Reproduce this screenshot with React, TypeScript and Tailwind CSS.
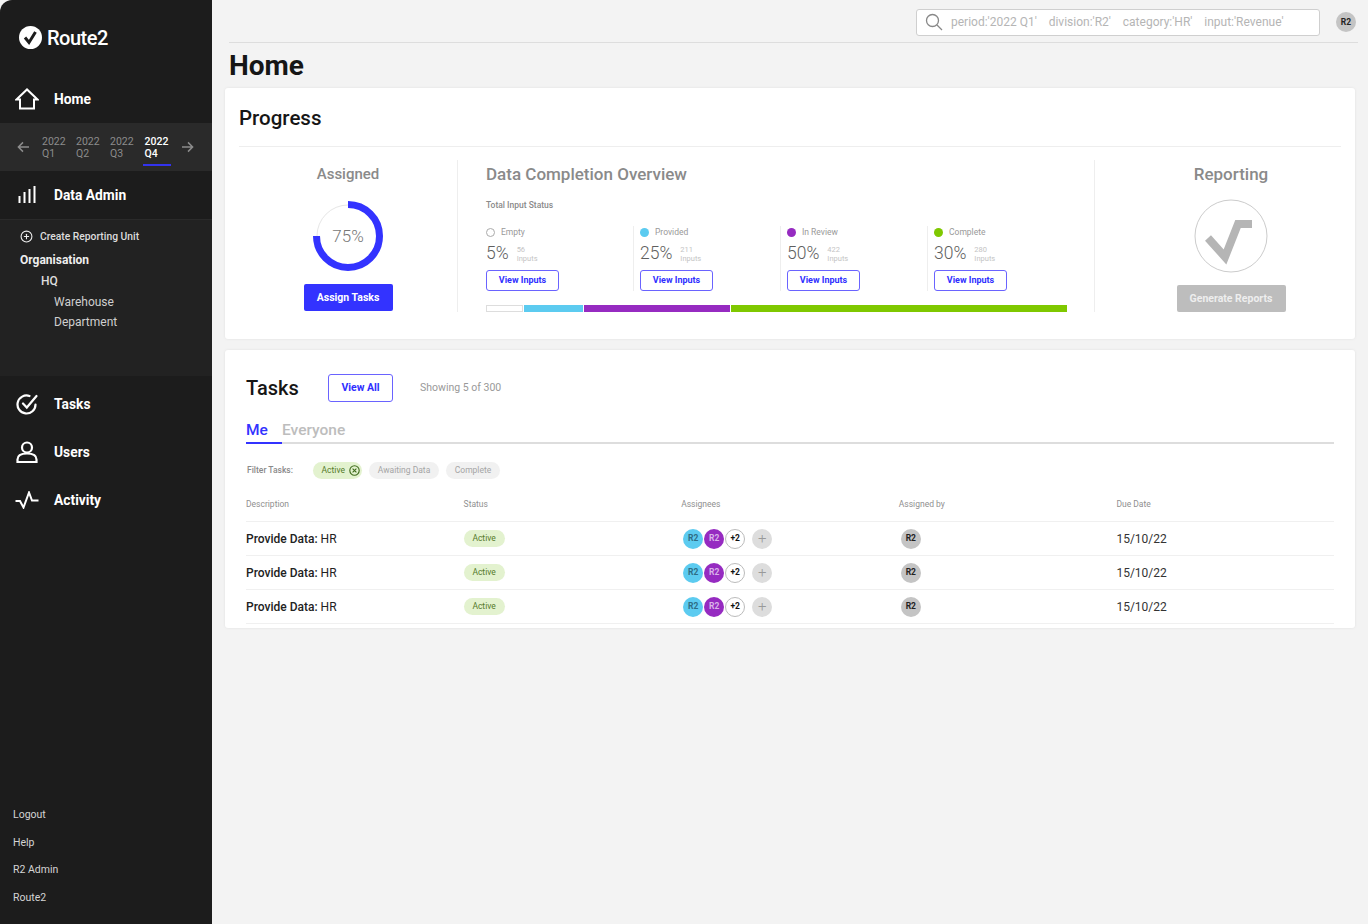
import { CirclePlus } from "lucide-react";

const font = { fontFamily: "Roboto, 'Liberation Sans', sans-serif" };

function HomeIcon() {
  return (
    <svg width="24" height="22" viewBox="0 0 24 22" fill="none" stroke="white" strokeWidth="2" strokeLinejoin="miter">
      <path d="M1.5 11.5 12 1.5l10.5 10H19V20.5H5V11.5Z" />
    </svg>
  );
}

function BarsIcon() {
  return (
    <svg width="18" height="18" viewBox="0 0 18 18" fill="none" stroke="white" strokeWidth="2">
      <path d="M1.5 10v7M6.5 6v11M11.5 3v14M16.5 0v17" />
    </svg>
  );
}

function TasksIcon() {
  return (
    <svg width="22" height="22" viewBox="0 0 22 22" fill="none" stroke="white" strokeWidth="2.2" strokeLinecap="round">
      <path d="M19.5 11.5A9 9 0 1 1 13.5 3" />
      <path d="M7 10.5l3.8 4L20.5 3" />
    </svg>
  );
}

function UserIcon() {
  return (
    <svg width="22" height="22" viewBox="0 0 22 22" fill="none" stroke="white" strokeWidth="2.2">
      <circle cx="11" cy="6.5" r="5" />
      <path d="M1.5 21v-2.5c0-4 4-6 9.5-6s9.5 2 9.5 6V21Z" />
    </svg>
  );
}

function ActivityIcon() {
  return (
    <svg width="24" height="18" viewBox="0 0 24 18" fill="none" stroke="white" strokeWidth="2">
      <path d="M0.5 10H5l3.5 6.5L14 1.5l3 8h6.5" />
    </svg>
  );
}

function ArrowIcon({ flip }: { flip?: boolean }) {
  return (
    <svg width="12" height="12" viewBox="0 0 13 12" fill="none" stroke="#8c8c8c" strokeWidth="1.6" className={flip ? "rotate-180" : ""}>
      <path d="M6.5 1 1.5 6l5 5M1.5 6H13" />
    </svg>
  );
}

function NavRow({ icon, label }: { icon: React.ReactNode; label: string }) {
  return (
    <div className="flex h-12 items-center">
      <div className="flex w-[54px] justify-center">{icon}</div>
      <span className="text-[13.8px] font-bold text-white">{label}</span>
    </div>
  );
}

function Stat({ color, label, pct, count, line }: { color: string; label: string; pct: string; count: string; line?: boolean }) {
  return (
    <div className={line ? "w-[147px] border-l border-[#eeeeee] pl-[6px]" : "w-[147px]"}>
      <div className="flex h-3 items-center gap-[6px]">
        {color === "empty" ? (
          <span className="h-[9px] w-[9px] rounded-full border border-[#aaaaaa] bg-white" />
        ) : (
          <span className="h-[9px] w-[9px] rounded-full" style={{ backgroundColor: color }} />
        )}
        <span className="text-[8.5px] text-[#999999]">{label}</span>
      </div>
      <div className="mt-[2px] flex h-[26px] items-center gap-2 pt-[2px]">
        <span className="text-[17.5px] font-light leading-none text-[#5f5f5f]">{pct}</span>
        <span className="text-[7.5px] leading-[9px] text-[#c4c4c4]">
          {count}
          <br />
          Inputs
        </span>
      </div>
      <button className="h-[21px] w-[73px] rounded-[3px] border-[1.5px] border-[#6a63ff] bg-white text-[9px] font-bold text-[#2f2fff]">
        View Inputs
      </button>
    </div>
  );
}

function Avatar({ bg, text, children }: { bg: string; text: string; children: string }) {
  return (
    <span className={`flex h-5 w-5 items-center justify-center rounded-full text-[8.5px] font-bold ${bg} ${text}`}>{children}</span>
  );
}

function TaskRow() {
  return (
    <div className="grid h-[34px] grid-cols-5 items-center border-t border-[#f0f0f0]">
      <div className="text-[12px] font-medium text-[#222222]">
        Provide Data: <span className="font-normal">HR</span>
      </div>
      <div className="flex">
        <span className="flex h-[17px] w-[41px] items-center justify-center rounded-full bg-[#e3f2cf] text-[8.5px] text-[#557a2a]">Active</span>
      </div>
      <div className="flex items-center pl-[2px]">
        <Avatar bg="bg-[#5ccbf0]" text="text-[#2f6d85]">R2</Avatar>
        <span className="ml-px"><Avatar bg="bg-[#962bc1]" text="text-[#d9b3e8]">R2</Avatar></span>
        <span className="ml-px flex h-5 w-5 items-center justify-center rounded-full border border-[#bbbbbb] bg-white text-[8.5px] font-bold text-[#111111]">+2</span>
        <span className="ml-[7px] flex h-5 w-5 items-center justify-center rounded-full bg-[#dddddd] text-[15px] font-light leading-none text-[#999999]">+</span>
      </div>
      <div className="pl-[2px]">
        <Avatar bg="bg-[#c4c4c4]" text="text-[#222222]">R2</Avatar>
      </div>
      <div className="text-[12px] text-[#333333]">15/10/22</div>
    </div>
  );
}

export default function App() {
  return (
    <div className="flex h-[924px] w-[1368px] overflow-hidden bg-[#f3f3f3]" style={font}>
      <aside className="flex w-[212px] shrink-0 flex-col rounded-tl-[12px] bg-[#1c1c1c]">
        <div className="flex h-[75px] items-center gap-[5px] pl-[19px]">
          <svg width="23" height="23" viewBox="0 0 23 23">
            <circle cx="11.5" cy="11.5" r="11.5" fill="white" />
            <path d="M6 11.5l4 5 6.5-10.5" fill="none" stroke="#1c1c1c" strokeWidth="3" />
          </svg>
          <span className="text-[20px] font-medium tracking-[-0.5px] text-white">Route2</span>
        </div>
        <NavRow icon={<HomeIcon />} label="Home" />
        <div className="flex h-12 items-center bg-[#2a2a2a] pl-[17px] pt-[2px] text-[10.5px] leading-[12px] text-[#8c8c8c]">
          <span className="-mt-[3px] w-[25px]"><ArrowIcon /></span>
          <div className="w-[34px]">2022<br />Q1</div>
          <div className="w-[34px]">2022<br />Q2</div>
          <div className="w-[34.5px]">2022<br />Q3</div>
          <div className="relative w-[37px] font-medium text-white">
            2022<br />Q4
            <span className="absolute -bottom-[6px] -left-[2px] h-[2px] w-[28px] bg-[#3333ee]" />
          </div>
          <span className="-mt-[3px]"><ArrowIcon flip /></span>
        </div>
        <NavRow icon={<BarsIcon />} label="Data Admin" />
        <div className="h-[157px] border-t border-[#2a2a2a] bg-[#222222] pl-5 pt-[9px]">
          <div className="flex h-[15px] items-center gap-[7px]">
            <CirclePlus size={13} color="#eeeeee" />
            <span className="text-[10.3px] font-medium text-[#dddddd]">Create Reporting Unit</span>
          </div>
          <div className="mt-[8px] text-[12px] font-bold leading-[17px] text-[#eeeeee]">Organisation</div>
          <div className="mt-[4px] pl-[21px] text-[12px] font-medium leading-[17px] text-[#dddddd]">HQ</div>
          <div className="mt-[3.5px] pl-[34px] text-[12px] leading-[17px] text-[#cfcfcf]">Warehouse</div>
          <div className="mt-[3.5px] pl-[34px] text-[12px] leading-[17px] text-[#cfcfcf]">Department</div>
        </div>
        <div className="h-[4px]" />
        <NavRow icon={<TasksIcon />} label="Tasks" />
        <NavRow icon={<UserIcon />} label="Users" />
        <NavRow icon={<ActivityIcon />} label="Activity" />
        <div className="mt-auto flex flex-col gap-[13px] pb-[19px] pl-[13px] text-[10.5px] leading-[14.5px] text-[#d4d4d4]">
          <span>Logout</span>
          <span>Help</span>
          <span>R2 Admin</span>
          <span>Route2</span>
        </div>
      </aside>

      <main className="flex-1 pl-[13px] pr-[13px]">
        <div className="-mr-[3px] ml-1 flex h-[43px] items-center justify-end gap-[16px] border-b border-[#dddddd] pt-[2px]">
          <div className="flex h-[27px] w-[404px] items-center rounded-[3px] border border-[#cfcfcf] bg-white pl-[8px] text-[12px] text-[#b5b5b5]">
            <svg width="18" height="18" viewBox="0 0 18 18" fill="none" stroke="#888888" strokeWidth="1.3">
              <circle cx="7.5" cy="7.5" r="6" />
              <path d="M12 12l5 5" />
            </svg>
            <span className="ml-[8px] whitespace-pre">period:'2022 Q1'    division:'R2'    category:'HR'    input:'Revenue'</span>
          </div>
          <span className="mr-[2px] flex h-5 w-5 items-center justify-center rounded-full bg-[#c4c4c4] text-[8.5px] font-bold text-[#222222]">R2</span>
        </div>
        <h1 className="ml-1 flex h-[45px] items-center text-[28px] font-bold text-[#161616]">Home</h1>

        <section className="h-[251px] rounded-[3px] bg-white px-[14px] shadow-[0_0_3px_rgba(0,0,0,0.08)]">
          <div className="flex h-[59px] items-center border-b border-[#eeeeee] pt-[2px] text-[20.5px] font-medium text-[#161616]">Progress</div>
          <div className="mt-[13px] flex h-[152px]">
            <div className="flex w-[219px] shrink-0 flex-col items-center border-r border-[#eeeeee]">
              <div className="text-[15px] font-medium leading-[28px] text-[#8a8a8a]">Assigned</div>
              <div className="relative mt-[13px] h-[70px] w-[70px]">
                <svg width="70" height="70" viewBox="0 0 70 70" fill="none">
                  <circle cx="35" cy="35" r="31" stroke="#e6e6e6" strokeWidth="1" />
                  <path d="M35 3.5A31.5 31.5 0 1 1 3.5 35" stroke="#3333ff" strokeWidth="7" />
                </svg>
                <span className="absolute inset-0 flex items-center justify-center pt-[2px] text-[17px] font-light text-[#777777]">75%</span>
              </div>
              <button className="mt-[13px] h-[27px] w-[89px] rounded-[2px] bg-[#3333ff] text-[10.5px] font-bold text-white">Assign Tasks</button>
            </div>
            <div className="w-[637px] shrink-0 border-r border-[#eeeeee] pl-[28px]">
              <div className="text-[17px] font-medium leading-[28px] text-[#8a8a8a]">Data Completion Overview</div>
              <div className="mt-[11px] text-[8.5px] font-medium leading-[12px] text-[#8a8a8a]">Total Input Status</div>
              <div className="mt-[15px] flex">
                <Stat color="empty" label="Empty" pct="5%" count="56" />
                <Stat color="#5ccbf0" label="Provided" pct="25%" count="211" line />
                <Stat color="#962bc1" label="In Review" pct="50%" count="422" line />
                <Stat color="#7fc800" label="Complete" pct="30%" count="280" line />
              </div>
              <div className="mt-[14px] flex h-[7px] w-[581px] gap-px">
                <div className="w-[37px] border border-[#dddddd] bg-white" />
                <div className="w-[59px] bg-[#5ccbf0]" />
                <div className="w-[146px] bg-[#962bc1]" />
                <div className="flex-1 bg-[#7fc800]" />
              </div>
            </div>
            <div className="flex flex-1 flex-col items-center pl-[26px]">
              <div className="text-[17px] font-medium leading-[28px] text-[#8a8a8a]">Reporting</div>
              <svg className="mt-[11px]" width="74" height="74" viewBox="0 0 74 74" fill="none">
                <circle cx="37" cy="37" r="36" stroke="#cccccc" strokeWidth="1" />
                <path d="M14 39l17 19 13-33h14" stroke="#b5b5b5" strokeWidth="8" />
              </svg>
              <button className="mt-[12px] h-[27px] w-[109px] rounded-[2px] bg-[#bdbdbd] text-[10.5px] font-bold text-[#eeeeee]">Generate Reports</button>
            </div>
          </div>
        </section>

        <section className="mt-[11px] h-[278px] rounded-[3px] bg-white px-[21px] shadow-[0_0_3px_rgba(0,0,0,0.08)]">
          <div className="flex h-[74px] items-center pt-[1px]">
            <h2 className="w-[82px] text-[20px] font-medium text-[#161616]">Tasks</h2>
            <button className="h-[28px] w-[65px] rounded-[3px] border-[1.5px] border-[#6a63ff] text-[10.5px] font-bold text-[#2f2fff]">View All</button>
            <span className="ml-[27px] text-[10.5px] text-[#999999]">Showing 5 of 300</span>
          </div>
          <div className="flex h-[20px] border-b-2 border-[#dddddd] text-[15.5px] font-medium leading-[13px]">
            <span className="h-[20px] w-[36px] border-b-2 border-[#3333ff] text-[#3333ff]">Me</span>
            <span className="text-[#bdbdbd]">Everyone</span>
          </div>
          <div className="flex h-[53px] items-center">
            <span className="w-[67px] pl-px text-[8.5px] font-medium text-[#8a8a8a]">Filter Tasks:</span>
            <span className="flex h-[17px] w-[49px] items-center justify-end gap-[4px] rounded-full bg-[#e3f2cf] pr-[2px] text-[8.5px] text-[#557a2a]">
              Active
              <svg width="11" height="11" viewBox="0 0 11 11" fill="none" stroke="#3f6b1c" strokeWidth="1.1">
                <circle cx="5.5" cy="5.5" r="4.7" />
                <path d="M3.6 3.6l3.8 3.8M7.4 3.6l-3.8 3.8" />
              </svg>
            </span>
            <span className="ml-[7px] flex h-[17px] w-[70px] items-center justify-center rounded-full bg-[#f1f1f1] text-[8.5px] text-[#a5a5a5]">Awaiting Data</span>
            <span className="ml-[7px] flex h-[17px] w-[54px] items-center justify-center rounded-full bg-[#f1f1f1] text-[8.5px] text-[#a5a5a5]">Complete</span>
          </div>
          <div className="grid h-[24px] grid-cols-5 items-start text-[8.5px] leading-[14px] text-[#8f8f8f]">
            <span>Description</span>
            <span>Status</span>
            <span>Assignees</span>
            <span>Assigned by</span>
            <span>Due Date</span>
          </div>
          <TaskRow />
          <TaskRow />
          <TaskRow />
          <div className="border-t border-[#f0f0f0]" />
        </section>
      </main>
    </div>
  );
}
